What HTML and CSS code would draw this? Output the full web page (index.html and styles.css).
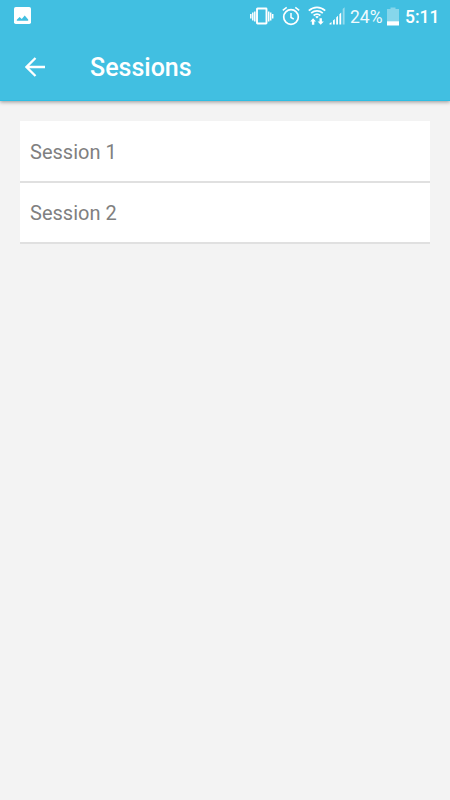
FILE: index.html
```html
<!DOCTYPE html>
<html lang="en">
<head>
<meta charset="utf-8">
<title>Sessions</title>
<link rel="stylesheet" href="styles.css">
</head>
<body>
<header class="header">
  <div class="status">
    <svg class="photo" width="17" height="17" viewBox="0 0 17 17"><rect width="17" height="17" rx="1.8" fill="#fff"/><path d="M2.800 13.800V12.800L5.600 10l2.200 2 2.900-3.500 3.500 4v1.300z" fill="#41bfe1"/></svg>
    <svg class="vibrate" width="24" height="20" viewBox="0 0 24 20"><rect x="7" y="2.500" width="9.500" height="15" rx=".5" fill="none" stroke="#fff" stroke-width="1.900"/><path d="M.8 8v4.500M2.800 6.500v8M4.800 5.500v10M18.700 5.500v10M20.700 6.500v8M22.700 8v4.500" stroke="#fff" stroke-width="1.500"/></svg>
    <svg class="alarm" width="18" height="20" viewBox="0 0 18 20"><circle cx="9" cy="11" r="7.300" fill="none" stroke="#fff" stroke-width="1.700"/><path d="M.8 4.400 4.700 1.400M17.200 4.400l-3.900-3M9 7v4.500l2.800 1.700" fill="none" stroke="#fff" stroke-width="1.500"/></svg>
    <svg class="wifi" width="18" height="20" viewBox="0 0 18 20"><path d="M.8 4.700C5.600.2 12.400.2 17.200 4.700M3.200 7.200c3.400-3 8.200-3 11.600 0M5.600 9.500c2-1.700 4.800-1.700 6.800 0" fill="none" stroke="#fff" stroke-width="1.700"/><path d="M7.200 10.700q1.800-1.200 3.600 0L9 12.600zM2.200 15.500 5.100 12.200l2.900 3.300H6.300V18.700h-2.400v-3.200zM9.600 15.400h1.900v-3.200h2.400v3.200h1.900l-3.100 3.300z" fill="#fff"/></svg>
    <svg class="signal" width="17" height="18" viewBox="0 0 17 18"><path d="M.5 16.500 2.500 15v2.500h-2zM4 13.500l1.800-1.600v5.600H4zM7.200 10.400 9 8.700v8.800H7.200zM10.400 7.200l1.800-1.700v12h-1.800z" fill="#fff"/><path d="M13.700 2 15.600.2v17.300h-1.900z" fill="#96dbed"/></svg>
    <span class="percent">24%</span>
    <svg class="battery" width="12" height="19" viewBox="0 0 12 19"><path d="M0 2h3.500V.5h5V2H12v12H0z" fill="#86d6eb"/><path d="M0 14.200h12v4.300H0z" fill="#fff"/></svg>
    <span class="clock">5:11</span>
  </div>
  <div class="toolbar">
    <svg class="back" width="20" height="20" viewBox="0 0 20 20"><path d="M20 10H1.800M10.500 1 1.500 10l9 9" fill="none" stroke="#fff" stroke-width="2.300"/></svg>
    <h1 class="title">Sessions</h1>
  </div>
</header>
<main>
  <ul class="list">
    <li class="row">Session 1</li>
    <li class="row">Session 2</li>
  </ul>
</main>
</body>
</html>
```
FILE: styles.css
```css
* { box-sizing: border-box; }
body {
  margin: 0;
  min-height: 800px;
  background: #f3f3f3;
  font-family: Roboto, sans-serif;
}
.header {
  height: 101px;
  background: #41bfe1;
  border-bottom: 1px solid #2dbde3;
  color: #fff;
  box-shadow: 0 1px 4px rgba(0, 0, 0, .4);
}
.status {
  display: flex;
  align-items: center;
  height: 32px;
  padding-left: 14px;
}
.status svg { flex: none; }
.photo { margin-bottom: 1px; }
.vibrate { margin-left: 219px; }
.alarm { margin-left: 8px; }
.wifi { margin-left: 8px; }
.signal { margin-left: 3px; }
.percent {
  width: 32px;
  margin-left: 4px;
  font-size: 17.500px;
  line-height: 32px;
  color: #effafd;
  padding-top: 1px;
}
.battery { margin-left: 5px; }
.clock {
  margin-left: 6px;
  font-size: 17.500px;
  font-weight: 500;
  line-height: 32px;
  padding-top: 1px;
}
.toolbar {
  display: flex;
  align-items: center;
  height: 68px;
  padding-left: 25px;
}
.back { margin-top: 1px; }
.title {
  margin: 2px 0 0 45px;
  font-size: 25px;
  font-weight: 500;
}
.list {
  list-style: none;
  margin: 20px;
  padding: 0;
}
.row {
  display: flex;
  align-items: center;
  height: 62px;
  padding: 2px 10px 0;
  background: #fff;
  border-bottom: 2px solid #e0e0e0;
  color: #808080;
  font-size: 20px;
}
.row:last-child {
  height: 61px;
  padding-top: 0;
}
```
